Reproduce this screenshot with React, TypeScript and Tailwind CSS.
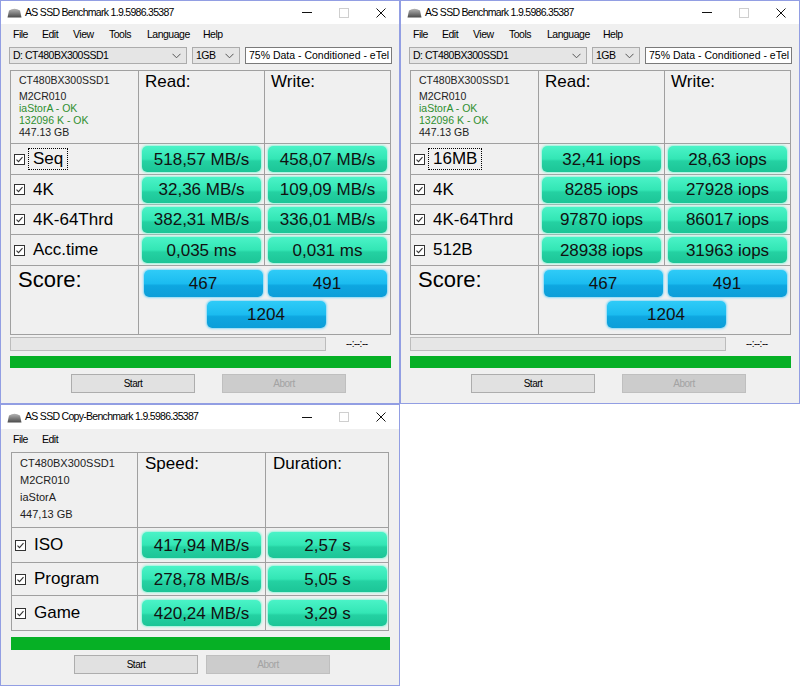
import React from "react";

const UI = "font-['Liberation_Sans',Arial,sans-serif] tracking-[-0.5px]";
const SANS = "font-['Liberation_Sans',Arial,sans-serif]";

type Row = { label: string; a: string; b: string; focus?: boolean };

function DiskIcon() {
  return (
    <svg width="15" height="11" viewBox="0 0 15 11" className="shrink-0">
      <defs>
        <linearGradient id="dk" x1="0" y1="0" x2="0" y2="1">
          <stop offset="0" stopColor="#b5b5b5" />
          <stop offset="1" stopColor="#4a4a4a" />
        </linearGradient>
      </defs>
      <path d="M0.5 10.5 L2 3.5 Q7.5 0 13 3.5 L14.5 10.5 Z" fill="url(#dk)" />
    </svg>
  );
}

function CheckBox() {
  return (
    <svg width="11" height="11" viewBox="0 0 11 11" className="shrink-0">
      <rect x="0.5" y="0.5" width="10" height="10" fill="#fff" stroke="#333" />
      <path d="M2.5 5.6 4.5 7.6 8.5 3.2" fill="none" stroke="#333" strokeWidth="1.1" />
    </svg>
  );
}

function Chevron() {
  return (
    <svg width="9" height="6" viewBox="0 0 9 6" className="ml-auto shrink-0">
      <path d="M0.5 0.8 4.5 4.8 8.5 0.8" fill="none" stroke="#555" />
    </svg>
  );
}

function TitleBar({ title }: { title: string }) {
  return (
    <div className="h-[23px] bg-white flex items-center shrink-0">
      <div className="ml-[6px]">
        <DiskIcon />
      </div>
      <span className={`${UI} ml-[3px] text-[10.5px] tracking-[-0.7px] text-black whitespace-nowrap`}>{title}</span>
      <div className="ml-auto flex h-full">
        <div className="w-[37px] flex items-center justify-center">
          <div className="w-[10px] h-px bg-[#111]" />
        </div>
        <div className="w-[37px] flex items-center justify-center">
          <div className="w-[10px] h-[10px] border border-[#cfcfcf]" />
        </div>
        <div className="w-[37px] flex items-center justify-center">
          <svg width="10" height="10" viewBox="0 0 10 10">
            <path d="M0.5 0.5 9.5 9.5 M9.5 0.5 0.5 9.5" stroke="#111" strokeWidth="1" />
          </svg>
        </div>
      </div>
    </div>
  );
}

function MenuBar({ items }: { items: [string, string][] }) {
  return (
    <div className={`${UI} h-[21px] flex items-center pl-[12px] text-[10.5px] text-black shrink-0`}>
      {items.map(([t, w]) => (
        <span key={t} className={w}>
          {t}
        </span>
      ))}
    </div>
  );
}

function GreenCell({ children, w }: { children: React.ReactNode; w: string }) {
  return (
    <div
      className={`${w} ${SANS} h-[26px] flex items-center justify-center rounded-[5px] bg-[linear-gradient(180deg,#4af3c7_0%,#33e6b5_50%,#24d1a2_58%,#1cc597_100%)] shadow-[0_0_2px_1px_#9af5dc] text-[17px] text-[#111] leading-none`}
    >
      {children}
    </div>
  );
}

function BlueCell({ children }: { children: React.ReactNode }) {
  return (
    <div
      className={`${SANS} w-[119px] h-[27px] flex items-center justify-center rounded-[5px] bg-[linear-gradient(180deg,#2fcbf7_0%,#1bbcf0_50%,#0ea6e0_58%,#0b9ed9_100%)] shadow-[0_0_2px_1px_#8ad9f7] text-[17px] text-[#111] leading-none`}
    >
      {children}
    </div>
  );
}

function Label({ text, focus }: { text: string; focus?: boolean }) {
  return (
    <div className="flex items-center h-full pl-[3px]">
      <CheckBox />
      <span
        className={`${SANS} text-[17px] leading-[20px] text-black ml-[3px] px-[4px] ${
          focus ? "border border-dotted border-black" : "border border-transparent"
        }`}
      >
        {text}
      </span>
    </div>
  );
}

function Buttons({ startMl, gap }: { startMl: string; gap: string }) {
  return (
    <div className={`flex ${gap} ${startMl}`}>
      <div className={`${UI} w-[124px] h-[19px] bg-[#e1e1e1] border border-[#adadad] flex items-center justify-center text-[10px] text-black`}>
        Start
      </div>
      <div className={`${UI} w-[124px] h-[19px] bg-[#cccccc] border border-[#bfbfbf] flex items-center justify-center text-[10px] text-[#a3a3a3]`}>
        Abort
      </div>
    </div>
  );
}

function Info() {
  return (
    <div className={`${SANS} text-[10.5px] leading-[12px] pl-[8px] pt-[3px] text-[#222]`}>
      <div className="mb-[4px]">CT480BX300SSD1</div>
      <div>M2CR010</div>
      <div className="text-[#2f8f2f]">iaStorA - OK</div>
      <div className="text-[#2f8f2f]">132096 K - OK</div>
      <div>447.13 GB</div>
    </div>
  );
}

const menuFull: [string, string][] = [
  ["File", "w-[29px]"],
  ["Edit", "w-[31px]"],
  ["View", "w-[36px]"],
  ["Tools", "w-[38px]"],
  ["Language", "w-[56px]"],
  ["Help", "w-[30px]"],
];

function BenchWindow({ rows }: { rows: Row[] }) {
  const line = "border-r border-b border-[#a0a0a0]";
  const heights = ["h-[31px]", "h-[30px]", "h-[30px]", "h-[31px]"];
  return (
    <div className="w-[400px] h-[404px] border border-[#929ee3] bg-[#f0f0f0] flex flex-col">
      <TitleBar title="AS SSD Benchmark 1.9.5986.35387" />
      <MenuBar items={menuFull} />
      <div className={`flex gap-[5px] ml-[8px] mt-[2px] h-[17px] text-black`}>
        <div className={`${UI} text-[10.5px] w-[178px] bg-[#e5e5e5] border border-[#acacac] flex items-center pl-[3px] pr-[5px] whitespace-nowrap`}>
          D: CT480BX300SSD1
          <Chevron />
        </div>
        <div className={`${UI} text-[10.5px] w-[48px] bg-[#e5e5e5] border border-[#acacac] flex items-center pl-[3px] pr-[5px]`}>
          1GB
          <Chevron />
        </div>
        <div className={`${SANS} text-[10.5px] w-[147px] bg-white border border-[#7a7a7a] flex items-center pl-[3px] overflow-hidden whitespace-nowrap`}>
          75% Data - Conditioned - eTel
        </div>
      </div>
      <div className="ml-[9px] mt-[6px] w-[381px] border-l border-t border-[#a0a0a0] grid grid-cols-[128px_126px_126px]">
        <div className={`${line} h-[73px]`}>
          <Info />
        </div>
        <div className={`${line} h-[73px] ${SANS} text-[17px] leading-[20px] pl-[6px] pt-[1px] text-black`}>Read:</div>
        <div className={`${line} h-[73px] ${SANS} text-[17px] leading-[20px] pl-[6px] pt-[1px] text-black`}>Write:</div>
        {rows.map((r, i) => (
          <React.Fragment key={r.label}>
            <div className={`${line} ${heights[i]}`}>
              <Label text={r.label} focus={r.focus} />
            </div>
            <div className={`${line} ${heights[i]} flex items-center pl-[3px]`}>
              <GreenCell w="w-[119px]">{r.a}</GreenCell>
            </div>
            <div className={`${line} ${heights[i]} flex items-center pl-[3px]`}>
              <GreenCell w="w-[119px]">{r.b}</GreenCell>
            </div>
          </React.Fragment>
        ))}
        <div className={`${line} h-[69px] ${SANS} text-[22px] leading-[26px] pl-[7px] pt-[1px] text-black`}>Score:</div>
        <div className={`${line} col-span-2 h-[69px] flex flex-col items-center pt-[4px]`}>
          <div className="flex gap-[5px] pl-[1px]">
            <BlueCell>467</BlueCell>
            <BlueCell>491</BlueCell>
          </div>
          <div className="mt-[4px] pl-[3px]">
            <BlueCell>1204</BlueCell>
          </div>
        </div>
      </div>
      <div className="flex items-center ml-[9px] mt-[2px] h-[14px]">
        <div className="w-[316px] h-full bg-[#e6e6e6] border border-[#bcbcbc]" />
        <span className={`${UI} ml-[20px] text-[10px] text-black leading-none`}>--:--:--</span>
      </div>
      <div className="ml-[9px] mt-[5px] w-[381px] h-[12px] bg-[#06b025]" />
      <div className="mt-[6px]">
        <Buttons startMl="ml-[70px]" gap="gap-[27px]" />
      </div>
    </div>
  );
}

function CopyWindow() {
  const line = "border-r border-b border-[#a0a0a0]";
  const rows = [
    { label: "ISO", a: "417,94 MB/s", b: "2,57 s", h: "h-[35px]" },
    { label: "Program", a: "278,78 MB/s", b: "5,05 s", h: "h-[33px]" },
    { label: "Game", a: "420,24 MB/s", b: "3,29 s", h: "h-[35px]" },
  ];
  return (
    <div className="w-[400px] h-[282px] border border-[#929ee3] bg-[#f0f0f0] flex flex-col">
      <div className="h-[24px] bg-white flex flex-col justify-center">
        <TitleBar title="AS SSD Copy-Benchmark 1.9.5986.35387" />
      </div>
      <MenuBar
        items={[
          ["File", "w-[29px]"],
          ["Edit", "w-[31px]"],
        ]}
      />
      <div className="ml-[10px] mt-[2px] w-[378px] border-l border-t border-[#a0a0a0] grid grid-cols-[126px_128px_123px]">
        <div className={`${line} h-[75px] ${SANS} text-[11px] leading-[17px] pl-[8px] pt-[2px] text-[#222]`}>
          <div>CT480BX300SSD1</div>
          <div>M2CR010</div>
          <div>iaStorA</div>
          <div>447,13 GB</div>
        </div>
        <div className={`${line} h-[75px] ${SANS} text-[17px] leading-[20px] pl-[7px] pt-[1px] text-black`}>Speed:</div>
        <div className={`${line} h-[75px] ${SANS} text-[17px] leading-[20px] pl-[7px] pt-[1px] text-black`}>Duration:</div>
        {rows.map((r) => (
          <React.Fragment key={r.label}>
            <div className={`${line} ${r.h}`}>
              <Label text={r.label} />
            </div>
            <div className={`${line} ${r.h} flex items-center pl-[4px]`}>
              <GreenCell w="w-[119px]">{r.a}</GreenCell>
            </div>
            <div className={`${line} ${r.h} flex items-center pl-[2px]`}>
              <GreenCell w="w-[119px]">{r.b}</GreenCell>
            </div>
          </React.Fragment>
        ))}
      </div>
      <div className="ml-[10px] mt-[6px] w-[379px] h-[13px] bg-[#06b025]" />
      <div className="mt-[5px]">
        <Buttons startMl="ml-[73px]" gap="gap-[8px]" />
      </div>
    </div>
  );
}

export default function App() {
  return (
    <div className="w-[800px] h-[686px] bg-white overflow-hidden">
      <div className="flex">
        <BenchWindow
          rows={[
            { label: "Seq", a: "518,57 MB/s", b: "458,07 MB/s", focus: true },
            { label: "4K", a: "32,36 MB/s", b: "109,09 MB/s" },
            { label: "4K-64Thrd", a: "382,31 MB/s", b: "336,01 MB/s" },
            { label: "Acc.time", a: "0,035 ms", b: "0,031 ms" },
          ]}
        />
        <BenchWindow
          rows={[
            { label: "16MB", a: "32,41 iops", b: "28,63 iops", focus: true },
            { label: "4K", a: "8285 iops", b: "27928 iops" },
            { label: "4K-64Thrd", a: "97870 iops", b: "86017 iops" },
            { label: "512B", a: "28938 iops", b: "31963 iops" },
          ]}
        />
      </div>
      <CopyWindow />
    </div>
  );
}
